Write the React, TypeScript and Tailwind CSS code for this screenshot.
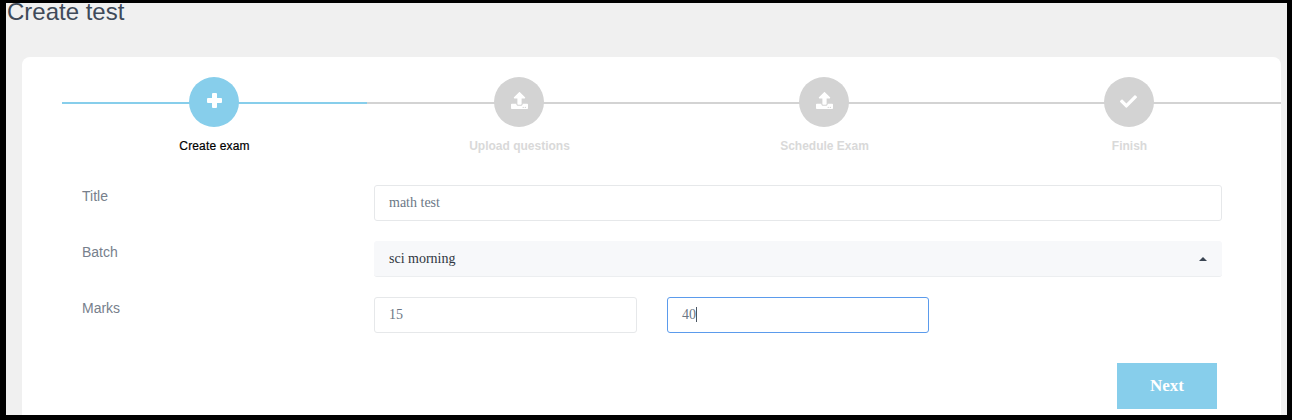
import React from "react";
import { FaCheck, FaUpload } from "react-icons/fa";

const PlusIcon = () => (
  <svg width="15" height="15" viewBox="0 0 15 15" fill="currentColor" className="ml-[1px]">
    <rect x="5" y="0" width="5" height="15" rx="1" />
    <rect x="0" y="5" width="15" height="5" rx="1" />
  </svg>
);

const steps = [
  { label: "Create exam", icon: PlusIcon, active: true },
  { label: "Upload questions", icon: FaUpload, active: false },
  { label: "Schedule Exam", icon: FaUpload, active: false },
  { label: "Finish", icon: FaCheck, active: false },
];

const inputClass =
  "h-9 flex items-center rounded-[3px] border border-[#e6e8ea] bg-white px-[14px] pb-[2px] text-[14px] text-[#6b7785]";

const App = () => {
  return (
    <div className="w-[1292px] h-[420px] bg-black pt-[3px] pl-[6px] pr-[5px] pb-[5px] font-['Liberation_Sans',Arial,sans-serif]">
      <div className="h-full bg-[#f0f0f0] pl-[16px] pr-[6px]">
        <h1 className="-ml-[15px] h-[54px] text-[24px] leading-[18px] text-[#3f4a59]">Create test</h1>
        <div className="h-[358px] rounded-t-lg bg-white pt-5 pl-10 overflow-hidden">
          <div className="flex w-[1220px]">
            {steps.map((step) => {
              const Icon = step.icon;
              return (
                <div key={step.label} className="relative w-[305px] flex flex-col items-center">
                  <div
                    className={
                      step.active
                        ? "absolute top-[25px] left-0 right-0 h-[2px] bg-[#87ceeb]"
                        : "absolute top-[25px] left-0 right-0 h-[2px] bg-[#d3d3d3]"
                    }
                  />
                  <div
                    className={
                      step.active
                        ? "relative mr-[2px] w-[50px] h-[50px] rounded-full bg-[#87ceeb] flex items-center justify-center pb-1 text-white"
                        : "relative mr-[2px] w-[50px] h-[50px] rounded-full bg-[#d3d3d3] flex items-center justify-center pb-1 text-white"
                    }
                  >
                    {step.label === "Finish" ? (
                      <Icon size={17} className="mt-[2px]" />
                    ) : (
                      <Icon size={17} className="ml-[1px]" />
                    )}
                  </div>
                  <p
                    className={
                      step.active
                        ? "mt-3 text-[12px] leading-[14px] tracking-[0.15px] [-webkit-text-stroke:0.2px_black] text-black"
                        : "mt-3 text-[12px] leading-[14px] font-bold text-[#d9d9d9]"
                    }
                  >
                    {step.label}
                  </p>
                </div>
              );
            })}
          </div>

          <div className="mt-8 ml-5 mr-[59px] grid grid-cols-[292px_1fr] gap-y-5 text-[14px] text-[#77808c]">
            <label className="leading-[22px]">Title</label>
            <div className={`${inputClass} font-['Liberation_Serif',serif]`}>math test</div>

            <label className="leading-[22px]">Batch</label>
            <div className="h-9 flex items-center justify-between rounded-[3px] border-b border-[#eceef0] bg-[#f7f8fa] pl-[15px] pr-[15px] font-['Liberation_Serif',serif] text-[14px] text-[#2f3640]">
              sci morning
              <span className="w-0 h-0 border-x-4 border-b-4 border-x-transparent border-b-[#3a4452]" />
            </div>

            <label className="leading-[22px]">Marks</label>
            <div className="flex gap-[30px] font-['Liberation_Serif',serif]">
              <div className={`${inputClass} w-[263px]`}>15</div>
              <div className="h-9 w-[262px] flex items-center rounded-[3px] border border-[#5b9bec] bg-white px-[14px] pb-[2px] text-[14px] text-[#6b7785]">
                40
                <span className="w-px h-[15px] bg-[#4a5562]" />
              </div>
            </div>
          </div>

          <div className="mt-[30px] mr-[64px] flex justify-end">
            <button className="w-[100px] h-[46px] bg-[#87ceeb] text-white text-[17px] font-bold font-['Liberation_Serif',serif]">
              Next
            </button>
          </div>
        </div>
      </div>
    </div>
  );
};

export default App;
